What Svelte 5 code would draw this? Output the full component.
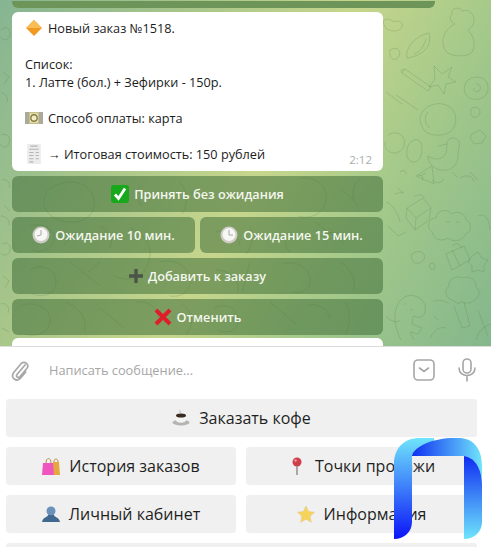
<script>
  const doodles = [
    // bear
    'M452 14c-2-6 8-8 10-3 6-2 12 2 12 9 0 5-3 8-6 10 6 6 8 16 4 22-4 5-18 5-24 1-7-5-6-17-1-23 3-3 6-5 8-6-5-2-6-7-3-10z',
    // watermelon
    'M407 58c-2-10 8-22 22-25 3 10-2 22-22 25zM414 54c6-2 10-8 12-15',
    'M384 20c4-2 8 0 10 2 4-2 10 0 8 5-2 4-8 5-12 3-4 0-8-6-6-10z',
    'M390 50c6-4 12 0 9 6s-11 4-9-6z',
    // pencil
    'M401 70l4-1 26 18-3 4-26-18zM405 69l-3 4',
    'M434 66l8 8 10-7-4 10 8 5-10 2-2 10-6-9-9 2 6-8z',
    // egg with spiral
    'M468 80c6-4 14-4 18 1 4 6 2 14-4 17-7 3-14 1-17-5-2-5 0-10 3-13zM476 84c4 0 6 4 3 7-3 2-6 0-5-3',
    'M472 108c4-2 8 0 8 4s-4 6-7 5-3-7-1-9z',
    // hedgehog
    'M420 118c2-12 18-18 28-12 10 5 10 20 2 26-8 5-22 4-26-2-2-3-4-7-4-12zM428 112c-4 4-4 12 2 16M396 95l22 15M386 92l16 12',
    // pizza, duck
    'M388 135c6-4 14-2 16 4 2 7-2 14-10 14-6 0-10-6-9-11',
    'M447 142c2-5 10-6 12 0 1 4-1 8-1 14 0 10-8 16-18 14-8-2-12-8-12-14 6 4 12 4 16 0 3-3 3-9 3-14zM447 144l-9 2',
    'M414 140c4-2 8 2 8 8s-2 14-8 14-8-6-7-12 3-8 7-10z',
    'M416 176l16-10 2 18zM420 176l6-3',
    'M472 134l8-4 6 6-4 7-8 1-4-6z',
    // top of lower half
    'M418 176c4-2 6 2 4 5',
    'M400 172c3-3 6-1 6 2',
    'M432 180c4 4 10 3 12-1M452 172l6 6M460 178c6-4 14-2 14 4M470 172l8 8',
    // cake
    'M407 208l16-10 8 10-2 12-14 10-9-12zM407 208l9 10 15-10M416 218l-1 12M414 197c4-3 8-3 10 0',
    'M398 188l6 6M395 194l8-2',
    // cloud
    'M432 232c-6-4-4-14 4-14 0-8 12-10 16-4 6-4 14 0 14 6 6 2 6 12 0 14-4 8-14 8-18 4-6 4-14 2-16-6z',
    'M446 222l4 0M456 222l4 0',
    'M478 216c8-4 12 6 12 14',
    // balloon column
    'M386 202c6 2 12 10 14 20M388 226l10 10 8-4',
    // gift
    'M446 254l18-8 6 14-18 10zM452 250l8 16M452 246c4-4 8-2 10 2',
    'M416 252c5-2 10 2 8 7s-10 6-12 1 0-7 4-8z',
    'M472 256l6-4 4 6 6 2-4 6 0 6-6-2-6 2 0-6-4-4z',
    'M430 264c3-2 5 0 5 3s-4 3-5 1-1-3 0-4z',
    // dino
    'M401 340c-6-12-8-24-4-34 3-8 10-12 18-10 7 2 12 8 10 16-1 6-8 6-12 4l-1 8 10 4-4 6-8-2 4 8',
    'M404 304h2M410 310h3',
    'M386 316c3 4 10 8 14 4',
    'M433 302c6-4 14 0 16 2',
    // broccoli
    'M452 300c-7-2-8-10-3-14-1-7 8-11 14-8 6-3 14 2 13 9 5 3 4 11-2 13-3 4-10 4-13 1l-2 3zM464 302l6 24-8 2-8-22M478 310l10 26',
    'M430 338c4-8 10-12 16-10',
    'M476 340c2-8 8-14 15-16',
    'M434 316l4 4',
    // left margin
    'M1 30c5-5 10-1 9 5s-8 6-9 2',
    'M3 72l6 5-5 7M1 92c4 2 8 6 6 10',
    'M1 135c6-2 10 2 8 8s-8 5-8 1',
    'M2 180c5-2 9 3 7 8M4 205l6 6M1 216c5 0 9 4 8 9',
    'M2 244c5-3 9 1 8 6s-7 7-9 3M3 276l6 5-4 7',
    'M1 304c5-2 9 3 7 9M2 328l7 4',
    // behind inline buttons
    'M60 184c16-6 32 2 34 16s-10 24-26 22-26-12-24-22 6-13 16-16z',
    'M180 182c8 10 8 22 2 32M190 192l14 6M140 186c-4 6-4 14 2 20',
    'M300 178c16-2 28 8 26 22s-16 20-28 16',
    'M360 178c-8 8-10 20-2 28M342 190l12 10',
    'M30 226c12-4 24 2 24 12s-12 16-22 12',
    'M75 232l-12 14M100 226c8 4 14 12 10 22',
    'M130 228c16 6 24 20 18 36s-22 18-34 12',
    'M216 232c12-4 24 4 24 14M250 226c4 10 2 20-4 28',
    'M315 222l30 22M320 236c10-6 20-4 26 4M290 232c-6 6-6 14 0 20',
    'M30 270c12-8 26 0 26 12s-12 16-24 12',
    'M70 262l30 24M88 272l12-10M160 262c14-4 28 4 30 16s-8 20-20 18',
    'M216 270c14 0 24 10 22 22M250 262l-8 30M282 264c12-4 26 2 28 14s-8 16-18 14',
    'M340 262c10 6 16 16 14 28',
    'M20 306c14-6 30 2 30 14s-14 18-24 14',
    'M66 302c14 6 22 18 18 30M100 308l24 20M136 302c12-2 22 6 22 16',
    'M182 304c12 8 12 22 4 30M214 308c12-6 24 0 24 12s-12 14-20 10',
    'M270 302l26 22M306 306c10-4 22 2 24 12M345 302c6 10 6 22 0 32'
  ];
</script>

<div class="app">
  <section class="chat">
    <svg class="doodles" width="491" height="346" viewBox="0 0 491 346" aria-hidden="true">
      {#each doodles as d}
        <path {d} />
      {/each}
    </svg>
    <div class="top-rest"></div>
    <div class="messages">
      <div class="bubble">
        <div class="line">
          <svg class="ico" viewBox="0 0 17 17"><path d="M8.500 1l7.500 7.500-7.500 7.500L1 8.500z" fill="#f09a22" /><path d="M8.500 1l7.500 7.500H1z" fill="#f9bd57" /></svg>
          <span>Новый заказ №1518.</span>
        </div>
        <div class="line gap">Список:</div>
        <div class="line">1. Латте (бол.) + Зефирки - 150р.</div>
        <div class="line gap">
          <svg class="ico" viewBox="0 0 18 18"><rect x="0" y="3" width="18" height="12" fill="#c9c08c" /><rect x="0" y="3" width="4" height="12" fill="#a9aa9c" /><rect x="14" y="3" width="4" height="12" fill="#a9aa9c" /><rect x="5" y="4.500" width="8" height="9" rx="1" fill="#f0ecc8" /><circle cx="9" cy="9" r="3.200" fill="none" stroke="#8a7f3c" stroke-width="1.400" /></svg>
          <span>Способ оплаты: карта</span>
        </div>
        <div class="line gap">
          <svg class="ico tall" viewBox="0 0 17 19"><rect x="2" y="0" width="13" height="19" fill="#ececec" /><path d="M5 2h7M4 5h9M4 8h4M10 8h3M4 11h4M10 11h3M4 14h4M10 14h3M4 17h4" stroke="#b4b4b4" /></svg>
          <span>→ Итоговая стоимость: 150 рублей</span>
        </div>
        <span class="time">2:12</span>
      </div>

      <button class="inline">
        <svg class="ico" viewBox="0 0 18 18"><rect width="18" height="18" rx="3" fill="#18a81c" /><path d="M4 9.500l3.500 4L14 3.500" fill="none" stroke="#fff" stroke-width="2.800" /></svg>
        Принять без ожидания
      </button>
      <div class="split">
        <button class="inline">
          <svg class="ico" viewBox="0 0 18 18"><circle cx="9" cy="9" r="8.500" fill="#cfccc6" /><circle cx="9" cy="8.500" r="6.500" fill="#f7f7f5" /><path d="M9 4v5l-4 1" fill="none" stroke="#a8a8a8" stroke-width="1" /></svg>
          Ожидание 10 мин.
        </button>
        <button class="inline">
          <svg class="ico" viewBox="0 0 18 18"><circle cx="9" cy="9" r="8.500" fill="#cfccc6" /><circle cx="9" cy="8.500" r="6.500" fill="#f7f7f5" /><path d="M9 4v5h4" fill="none" stroke="#a8a8a8" stroke-width="1" /></svg>
          Ожидание 15 мин.
        </button>
      </div>
      <button class="inline">
        <svg class="ico small" viewBox="0 0 14 14"><path d="M7 0v14M0 7h14" stroke="#4a5547" stroke-width="3.400" /></svg>
        Добавить к заказу
      </button>
      <button class="inline">
        <svg class="ico" viewBox="0 0 18 18"><path d="M2 2l14 14M16 2L2 16" stroke="#dd1f2a" stroke-width="4" /></svg>
        Отменить
      </button>
      <div class="next-bubble"></div>
    </div>
  </section>

  <div class="composer">
    <svg class="clip" width="20" height="22" viewBox="0 0 20 22"><path d="M15 6l-8 9.500c-1.500 2 1 4 2.800 2.300l7-8.300c3-3.800-2-8-5.600-5l-7.500 9c-4 5.500 3 10 7 5.500l5-6" fill="none" stroke="#a8a8a8" stroke-width="1.700" stroke-linecap="round" /></svg>
    <span class="placeholder">Написать сообщение...</span>
    <svg width="22" height="22" viewBox="0 0 22 22"><rect x="1" y="1" width="20" height="20" rx="4" fill="none" stroke="#a6a6a6" stroke-width="1.600" /><path d="M6.500 9l4.500 3.500L15.500 9" fill="none" stroke="#a6a6a6" stroke-width="1.600" stroke-linecap="round" /></svg>
    <svg class="mic" width="18" height="24" viewBox="0 0 18 24"><rect x="5" y="1" width="8" height="14" rx="4" fill="none" stroke="#a6a6a6" stroke-width="1.600" /><path d="M1 10c0 10 16 10 16 0M9 18v5" fill="none" stroke="#a6a6a6" stroke-width="1.600" stroke-linecap="round" /></svg>
  </div>

  <div class="keyboard">
    <button class="key">
      <svg class="key-ico" viewBox="0 0 18 18"><ellipse cx="9" cy="13.500" rx="8.500" ry="3" fill="#b4b4b0" /><path d="M4 6h10v5c0 3.500-10 3.500-10 0z" fill="#f4f4f2" /><ellipse cx="9" cy="6.500" rx="5" ry="2" fill="#3a2a20" /><path d="M8 1c-1 1 1 2 0 3" fill="none" stroke="#bbb" /></svg>
      Заказать кофе
    </button>
    <div class="key-row">
      <button class="key">
        <svg class="key-ico" viewBox="0 0 18 18"><path d="M1 6h11l1 12H0z" fill="#ee55be" /><path d="M11 5h6l1 13h-6z" fill="#e5a83e" /><path d="M4 6c0-6 5-6 5 0M12 5c0-4 4-4 4 0" fill="none" stroke="#b98a4e" /></svg>
        История заказов
      </button>
      <button class="key">
        <svg class="key-ico" viewBox="0 0 18 18"><circle cx="9" cy="5" r="4.500" fill="#cf3f4c" /><circle cx="7.500" cy="3.500" r="1.200" fill="#ee9aa0" /><path d="M9 9v9" stroke="#888" stroke-width="1.400" /></svg>
        Точки продажи
      </button>
    </div>
    <div class="key-row">
      <button class="key">
        <svg class="key-ico" viewBox="0 0 18 18"><circle cx="9" cy="6" r="4.500" fill="#6a91b8" /><path d="M0 17c1-5 6-5 6-7h6c0 2 5 2 6 7z" fill="#41688f" /></svg>
        Личный кабинет
      </button>
      <button class="key">
        <svg class="key-ico" viewBox="0 0 18 18"><path d="M9 1l2.500 5.500 6 .7-4.400 4 1.200 6L9 14.200 3.700 17.200l1.200-6-4.400-4 6-.7z" fill="#f6d35a" stroke="#e6c98c" stroke-width=".6" /></svg>
        Информация
      </button>
    </div>
    <div class="key-rest"></div>
  </div>

  <svg class="logo" width="88" height="101" viewBox="0 0 88 101" aria-hidden="true">
    <defs>
      <linearGradient id="lg-left" x1="0" y1="0" x2="0" y2="1">
        <stop offset="0" stop-color="#6fe4fb" />
        <stop offset="1" stop-color="#0a14f8" />
      </linearGradient>
      <linearGradient id="lg-top" x1="0" y1="0" x2="1" y2="0">
        <stop offset="0" stop-color="#1030f0" />
        <stop offset="1" stop-color="#6fe4fb" />
      </linearGradient>
      <linearGradient id="lg-right" x1="0" y1="0" x2="0" y2="1">
        <stop offset="0" stop-color="#0f2cf2" />
        <stop offset="1" stop-color="#6fe4fb" />
      </linearGradient>
    </defs>
    <path d="M0 101V26C0 10 10 0 26 0h14v18H18v66c0 10-8 17-18 17z" fill="url(#lg-left)" />
    <path d="M18 18C20 8 40 0 60 0h4c15 0 24 10 24 28v14C86 28 80 20 70 18z" fill="url(#lg-top)" />
    <path d="M70 18c12 2 18 14 18 30v36c0 10-8 17-18 17z" fill="url(#lg-right)" />
  </svg>
</div>

<style>
  :global(body) {
    margin: 0;
    background: #fff;
  }

  .app {
    position: relative;
    width: 491px;
    height: 547px;
    overflow: hidden;
    font-family: "Open Sans", "Noto Sans", sans-serif;
  }

  .chat {
    position: relative;
    height: 346px;
    overflow: hidden;
    background: linear-gradient(120deg, #86b592 0%, #a4c48a 25%, #c6d68c 52%, #a4c98a 72%, #84b78c 100%);
    border-bottom: 1px solid #dcdcdc;
  }

  .doodles {
    position: absolute;
    left: 0;
    top: 0;
  }

  .doodles path {
    fill: none;
    stroke: rgba(80, 120, 70, 0.22);
    stroke-width: 1;
  }

  .top-rest {
    position: relative;
    width: 423px;
    height: 7px;
    margin: 1px 0 0 12px;
    background: #6d9459;
    border-radius: 0 0 6px 6px;
  }

  .messages {
    position: relative;
    display: flex;
    flex-direction: column;
    gap: 5px;
    width: 371px;
    margin: 4px 0 0 12px;
  }

  .bubble {
    position: relative;
    height: 159px;
    box-sizing: border-box;
    padding: 7px 14px 0 13px;
    background: #fff;
    border-radius: 6px;
    font-size: 12.700px;
    line-height: 18px;
    color: #1c1c1c;
  }

  .line {
    display: flex;
    align-items: center;
    gap: 5px;
    height: 18px;
  }

  .gap {
    margin-top: 18px;
  }

  .line .ico {
    flex: none;
    width: 18px;
    height: 18px;
  }

  .line .ico.tall {
    height: 20px;
  }

  .time {
    position: absolute;
    right: 11px;
    bottom: 4px;
    font-size: 11.500px;
    line-height: 14px;
    color: #a8b0a8;
  }

  .inline {
    display: flex;
    flex: 1 0 36px;
    align-items: center;
    justify-content: center;
    gap: 5px;
    height: 36px;
    min-width: 0;
    padding: 0;
    border: none;
    border-radius: 6px;
    background: rgba(66, 112, 58, 0.55);
    color: #f4f7ee;
    font: 600 12.700px "Open Sans", "Noto Sans", sans-serif;
  }

  .inline .ico {
    width: 18px;
    height: 18px;
  }

  .inline .ico.small {
    width: 14px;
    height: 14px;
  }

  .split {
    display: flex;
    gap: 5px;
  }

  .next-bubble {
    flex: none;
    height: 12px;
    margin-top: -2px;
    background: #fff;
    border-radius: 6px 6px 0 0;
  }

  .composer {
    display: flex;
    align-items: center;
    height: 46px;
    padding: 0 15px 0 10px;
    background: #fff;
  }

  .clip {
    flex: none;
  }

  .placeholder {
    flex: 1;
    margin-left: 19px;
    font-size: 12.800px;
    color: #a6a6a6;
  }

  .mic {
    margin-left: 23px;
  }

  .keyboard {
    display: flex;
    flex-direction: column;
    gap: 10px;
    padding: 6px 14px 0 6px;
    background: #fff;
  }

  .key-row {
    display: grid;
    grid-template-columns: 230px 1fr;
    gap: 10px;
  }

  .key {
    display: flex;
    flex: 1 0 38px;
    align-items: center;
    justify-content: center;
    gap: 9px;
    height: 38px;
    min-width: 0;
    padding: 0;
    border: none;
    border-radius: 3px;
    background: #f0f0f0;
    color: #1f1f1f;
    font: 400 16px "Open Sans", "Noto Sans", sans-serif;
  }

  .key-ico {
    width: 18px;
    height: 18px;
  }

  .key-rest {
    flex: none;
    height: 8px;
    background: #f0f0f0;
    border-radius: 3px;
  }

  .logo {
    position: absolute;
    left: 394px;
    top: 438px;
  }
</style>
